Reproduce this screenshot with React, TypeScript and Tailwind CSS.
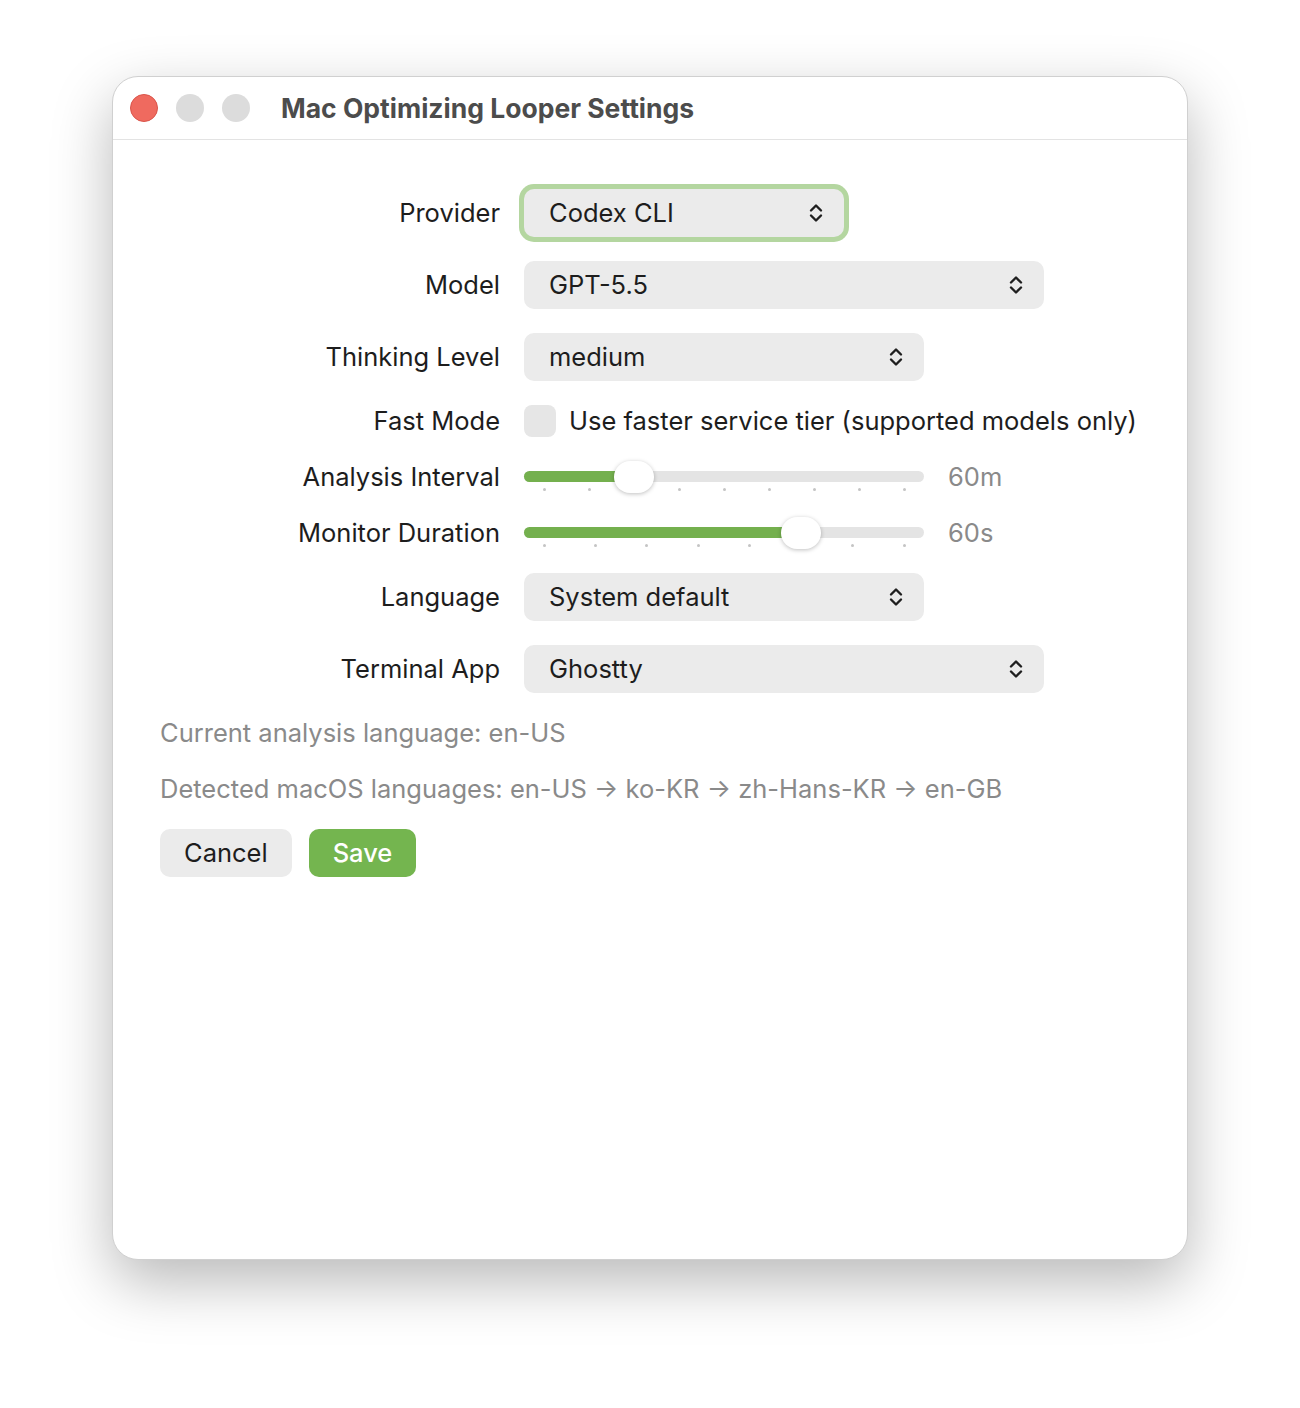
import React from "react";

const font = { fontFamily: "Inter, 'Noto Sans', sans-serif" };

function Chevrons() {
  return (
    <svg width="16" height="24" viewBox="0 0 16 24" fill="none">
      <path
        d="M3 9.5 L8 4.5 L13 9.5"
        stroke="#1f1f1f"
        strokeWidth="2.4"
        strokeLinecap="round"
        strokeLinejoin="round"
      />
      <path
        d="M3 14.5 L8 19.5 L13 14.5"
        stroke="#1f1f1f"
        strokeWidth="2.4"
        strokeLinecap="round"
        strokeLinejoin="round"
      />
    </svg>
  );
}

function Select({
  value,
  width,
  focused,
}: {
  value: string;
  width: string;
  focused?: boolean;
}) {
  return (
    <div
      className={`${width} h-[48px] rounded-[10px] bg-[#ebebeb] flex items-center justify-between pl-[25px] pr-[20px] ${
        focused ? "ring-[5px] ring-[#b4d6a0]" : ""
      }`}
    >
      <span className="text-[25.5px] text-[#1d1d1d]">{value}</span>
      <Chevrons />
    </div>
  );
}

function Slider({
  ticks,
  index,
  value,
}: {
  ticks: number;
  index: number;
  value: string;
}) {
  // track 400px wide, ticks inset by half the thumb
  const span = 360;
  const pos = 20 + (span / (ticks - 1)) * index;

  return (
    <div className="flex items-center gap-6">
      <div className="relative w-[400px] h-[32px]">
        <div className="absolute left-0 right-0 top-[10px] h-[11px] rounded-full bg-[#e4e4e4]" />
        <div
          className="absolute left-0 top-[10px] h-[11px] rounded-full bg-[#74b04e]"
          style={{ width: pos }}
        />
        {Array.from({ length: ticks }).map((_, i) => (
          <div
            key={i}
            className="absolute top-[27px] w-[3px] h-[3px] rounded-full bg-[#c4c4c4]"
            style={{ left: 20 + (span / (ticks - 1)) * i - 1.5 }}
          />
        ))}
        <div
          className="absolute top-0 w-[40px] h-[32px] rounded-full bg-white shadow-[0_1px_4px_rgba(0,0,0,0.25)]"
          style={{ left: pos - 20 }}
        />
      </div>
      <span className="text-[25.5px] text-[#8a8a8a]">{value}</span>
    </div>
  );
}

function Row({
  label,
  children,
  h = "h-[48px]",
}: {
  label: string;
  children: React.ReactNode;
  h?: string;
}) {
  return (
    <div className={`flex items-center gap-[24px] ${h}`}>
      <div className="w-[340px] text-right text-[25.5px] text-[#1d1d1d]">
        {label}
      </div>
      {children}
    </div>
  );
}

export default function App() {
  return (
    <div
      className="w-[1300px] h-[1408px] bg-white pt-[76px] pl-[112px]"
      style={font}
    >
      <div className="w-[1076px] h-[1184px] rounded-[26px] bg-white border border-[#d0d0d0] shadow-[0_22px_60px_rgba(0,0,0,0.28)] overflow-hidden flex flex-col">
        {/* TITLE BAR */}
        <div className="h-[63px] border-b border-[#e3e3e3] flex items-center pl-[17px] shrink-0">
          <div className="flex items-center gap-[18px]">
            <div className="w-[28px] h-[28px] rounded-full bg-[#ef6a5f] border border-[#d9544a]" />
            <div className="w-[28px] h-[28px] rounded-full bg-[#dcdcdc]" />
            <div className="w-[28px] h-[28px] rounded-full bg-[#dcdcdc]" />
          </div>
          <div className="ml-[31px] mt-[2px] text-[26.5px] font-bold text-[#4c4c4c]">
            Mac Optimizing Looper Settings
          </div>
        </div>

        {/* FORM */}
        <div className="flex flex-col gap-6 pt-[49px] pl-[47px]">
          <Row label="Provider">
            <Select value="Codex CLI" width="w-[320px]" focused />
          </Row>
          <Row label="Model">
            <Select value="GPT-5.5" width="w-[520px]" />
          </Row>
          <Row label="Thinking Level">
            <Select value="medium" width="w-[400px]" />
          </Row>
          <Row label="Fast Mode" h="h-[32px]">
            <div className="flex items-center gap-[13px]">
              <div className="w-[32px] h-[32px] rounded-[8px] bg-[#e6e6e6]" />
              <span className="text-[25.5px] text-[#1d1d1d]">
                Use faster service tier (supported models only)
              </span>
            </div>
          </Row>
          <Row label="Analysis Interval" h="h-[32px]">
            <Slider ticks={9} index={2} value="60m" />
          </Row>
          <Row label="Monitor Duration" h="h-[32px]">
            <Slider ticks={8} index={5} value="60s" />
          </Row>
          <Row label="Language">
            <Select value="System default" width="w-[400px]" />
          </Row>
          <Row label="Terminal App">
            <Select value="Ghostty" width="w-[520px]" />
          </Row>

          <div className="text-[25.5px] text-[#8a8a8a] h-[32px] leading-[32px]">
            Current analysis language: en-US
          </div>
          <div className="text-[25.5px] text-[#8a8a8a] h-[32px] leading-[32px]">
            Detected macOS languages: en-US → ko-KR → zh-Hans-KR → en-GB
          </div>

          <div className="flex gap-[17px]">
            <button className="h-[48px] px-[24px] rounded-[10px] bg-[#ebebeb] text-[25.5px] text-[#1d1d1d]">
              Cancel
            </button>
            <button className="h-[48px] px-[24px] rounded-[10px] bg-[#74b54f] text-[25.5px] text-white font-medium">
              Save
            </button>
          </div>
        </div>
      </div>
    </div>
  );
}
